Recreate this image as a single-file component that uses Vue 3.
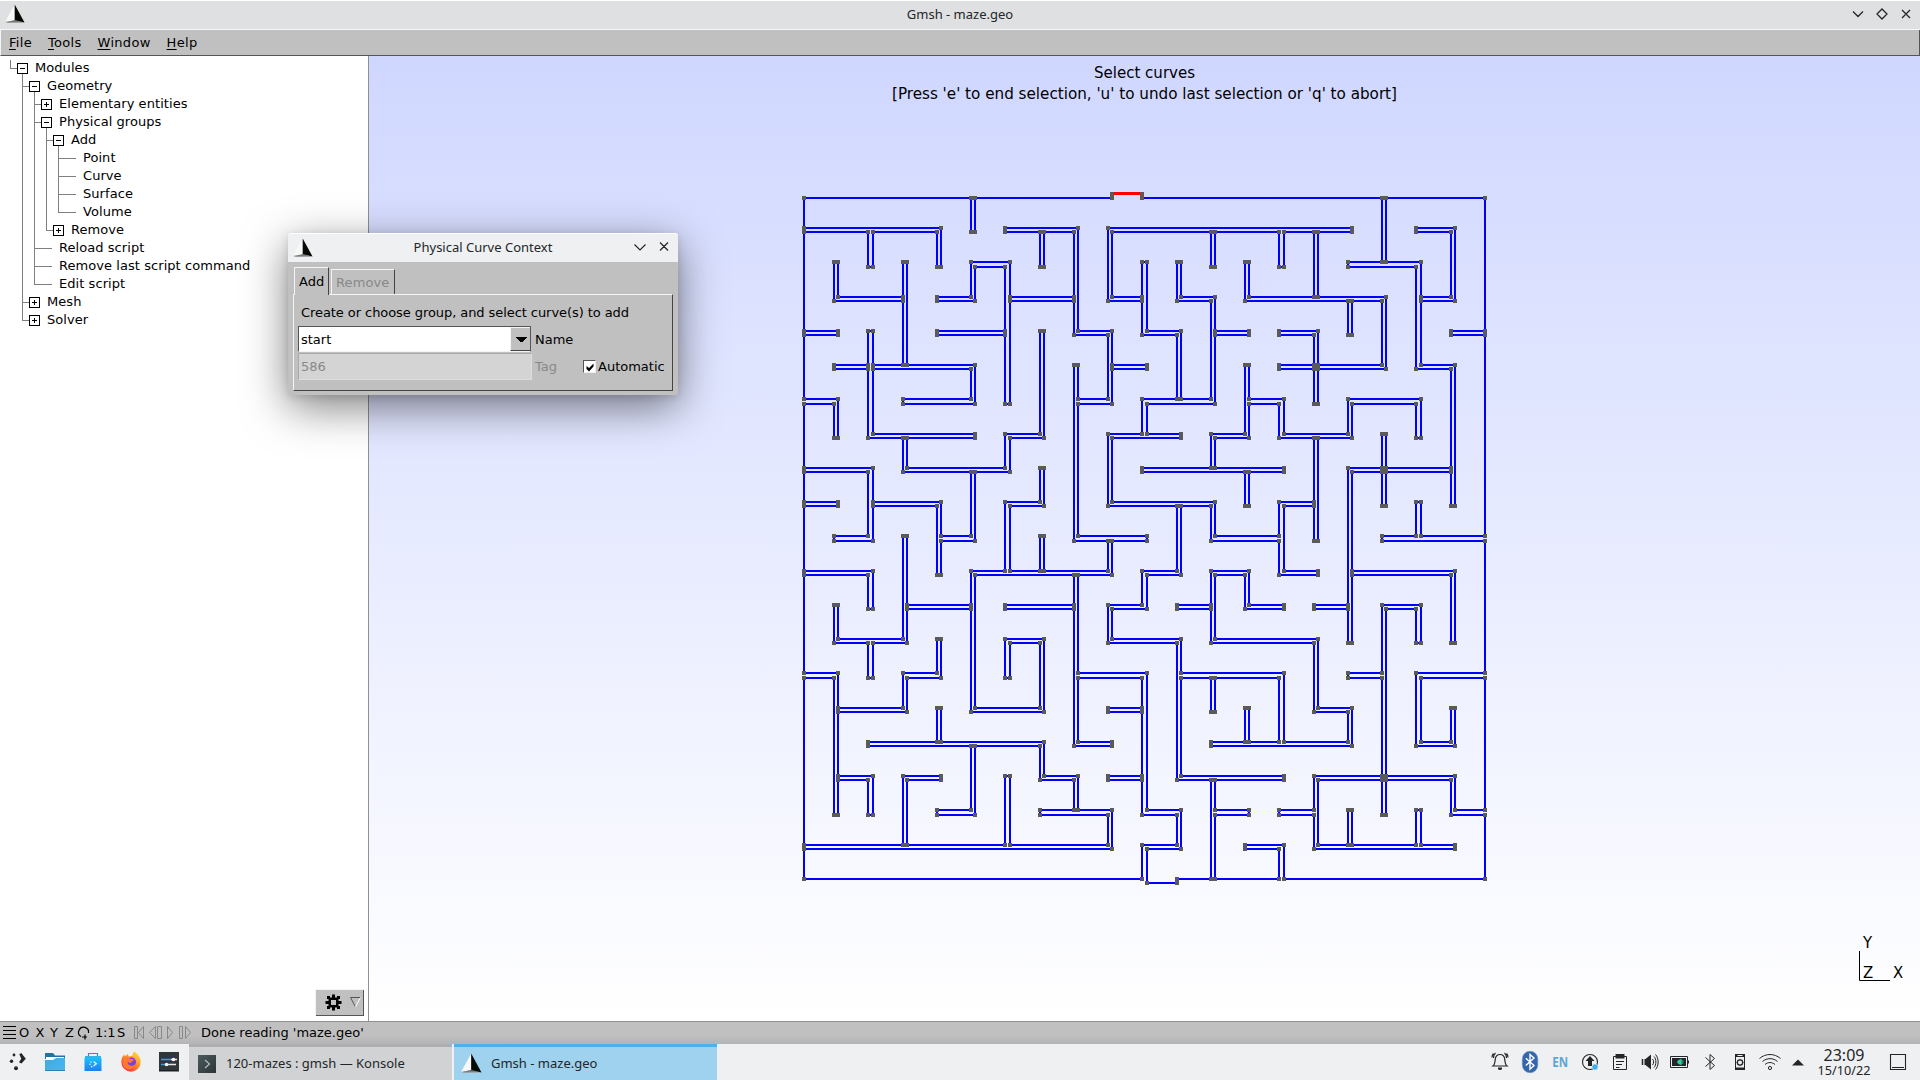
<script setup>
const menus = ['File', 'Tools', 'Window', 'Help']

// rails: depths whose vertical guide continues past the row
const tree = [
  { label: 'Modules', depth: 0, kind: 'open', rails: [] },
  { label: 'Geometry', depth: 1, kind: 'open', rails: [1] },
  { label: 'Elementary entities', depth: 2, kind: 'closed', rails: [1, 2] },
  { label: 'Physical groups', depth: 2, kind: 'open', rails: [1, 2] },
  { label: 'Add', depth: 3, kind: 'open', rails: [1, 2, 3] },
  { label: 'Point', depth: 4, kind: 'leaf', rails: [1, 2, 3, 4] },
  { label: 'Curve', depth: 4, kind: 'leaf', rails: [1, 2, 3, 4] },
  { label: 'Surface', depth: 4, kind: 'leaf', rails: [1, 2, 3, 4] },
  { label: 'Volume', depth: 4, kind: 'leaf', rails: [1, 2, 3] },
  { label: 'Remove', depth: 3, kind: 'closed', rails: [1, 2] },
  { label: 'Reload script', depth: 2, kind: 'leaf', rails: [1, 2] },
  { label: 'Remove last script command', depth: 2, kind: 'leaf', rails: [1, 2] },
  { label: 'Edit script', depth: 2, kind: 'leaf', rails: [1] },
  { label: 'Mesh', depth: 1, kind: 'closed', rails: [1] },
  { label: 'Solver', depth: 1, kind: 'closed', rails: [] },
]

function guides(row) {
  const x = 10.5 + 12 * row.depth
  let d = row.rails.map((r) => `M${10.5 + 12 * r} 0V18`).join('')
  if (!row.rails.includes(row.depth)) d += `M${x} 0V9`
  d += `M${x} 8.5H${row.kind === 'leaf' ? x + 17.5 : x + 7}`
  if (row.kind === 'open') d += `M${x + 12} 14V18`
  return d
}

// Maze: the two faces of every wall, by grid index
const xs = [[null, 804], [834, 838], [868, 873], [903, 907], [937, 941], [971, 975], [1005, 1010], [1040, 1044], [1074, 1078], [1108, 1112], [1142, 1147], [1177, 1181], [1211, 1215], [1245, 1249], [1279, 1284], [1314, 1318], [1348, 1352], [1382, 1386], [1416, 1421], [1451, 1455], [1485, null]]
const ys = [[194, 198], [228, 232], [262, 267], [297, 301], [331, 335], [365, 369], [399, 404], [434, 438], [468, 472], [502, 506], [536, 541], [571, 575], [605, 609], [639, 643], [673, 678], [708, 712], [742, 746], [776, 780], [810, 815], [845, 849], [879, 883]]

const across = [
  '0-9 10-20',
  '0-4 6-8 9-16 18-19',
  '5-6 16-18',
  '1-3 4-5 6-8 9-10 11-12 13-17 18-19',
  '0-1 4-6 8-9 10-11 12-13 14-15 19-20',
  '1-5 9-10 14-17 18-19',
  '0-1 3-5 8-9 10-12 13-14 16-18',
  '2-5 6-7 9-11 12-13 14-16',
  '0-2 3-6 10-14 16-19',
  '0-1 2-4 6-7 9-12 14-15',
  '1-2 4-5 8-10 12-14 17-20',
  '0-2 5-9 10-11 12-13 14-15 16-19',
  '3-5 6-8 9-10 11-12 13-14 15-16 17-18',
  '1-3 6-7 9-11 12-15',
  '0-1 3-4 8-10 11-14 16-17 18-20',
  '1-3 5-7 9-10 15-16',
  '2-7 8-9 12-16 18-19',
  '1-2 3-4 7-8 9-10 11-14 15-19',
  '4-5 7-9 10-11 12-13 14-15 19-20',
  '0-9 10-11 13-14 15-19',
  '0-10 11-20',
]
const down = [
  '0-20',
  '2-3 6-7 12-13 14-18',
  '1-2 4-7 8-10 11-12 13-14 17-18',
  '2-5 7-8 10-13 14-15 17-19',
  '1-2 9-11 13-14 15-16',
  '0-1 2-3 5-6 8-10 11-15 16-18',
  '2-6 7-8 9-11 13-14 17-19',
  '1-2 4-7 8-9 10-11 13-15 16-17',
  '1-4 5-10 11-16 17-18',
  '1-3 4-6 7-9 10-11 12-13 18-19',
  '2-4 6-7 11-12 14-18 19-20',
  '2-3 4-6 9-11 13-17 18-19',
  '1-2 3-6 7-8 9-10 11-13 14-15 17-20',
  '2-3 5-7 8-9 11-12 15-16',
  '1-2 6-7 9-11 14-16 19-20',
  '1-3 4-6 7-10 13-15 17-19',
  '3-4 6-7 8-13 15-16 18-19',
  '0-2 3-5 7-9 12-18',
  '2-5 6-7 9-10 12-13 14-16 18-19',
  '1-3 5-9 11-13 15-16 17-18',
  '0-20',
]

const spans = (text) => text.split(' ').map((s) => s.split('-').map(Number))
const edges = new Set()
across.forEach((t, j) => spans(t).forEach(([a, b]) => { for (let i = a; i < b; i++) edges.add(`h${i},${j}`) }))
down.forEach((t, i) => spans(t).forEach(([a, b]) => { for (let j = a; j < b; j++) edges.add(`v${i},${j}`) }))

let curves = ''
const points = []
const line = (x1, y1, x2, y2) => {
  if (x1 !== null && x2 !== null) curves += `M${x1} ${y1}L${x2} ${y2}`
}
for (let i = 0; i <= 20; i++) {
  for (let j = 0; j <= 20; j++) {
    const [x0, x1] = xs[i]
    const [y0, y1] = ys[j]
    const n = edges.has(`v${i},${j - 1}`)
    const s = edges.has(`v${i},${j}`)
    const w = edges.has(`h${i - 1},${j}`)
    const e = edges.has(`h${i},${j}`)
    if (!(n || s || w || e)) continue
    if (!n && j > 0) line(x0, y0, x1, y0)
    if (!s && j < 20) line(x0, y1, x1, y1)
    if (!w) line(x0, y0, x0, y1)
    if (!e) line(x1, y0, x1, y1)
    if (e) {
      if (j > 0) line(x1, y0, xs[i + 1][0], y0)
      if (j < 20) line(x1, y1, xs[i + 1][0], y1)
    }
    if (s) {
      line(x0, y1, x0, ys[j + 1][0])
      line(x1, y1, x1, ys[j + 1][0])
    }
    if (n === w && x0 !== null) points.push([x0, y0])
    if (n === e && x1 !== null) points.push([x1, y0])
    if (s === w && x0 !== null) points.push([x0, y1])
    if (s === e && x1 !== null) points.push([x1, y1])
  }
}
curves += 'M1147 883H1177'
</script>

<template>
  <div class="desktop">
    <svg class="defs" width="0" height="0">
      <defs>
        <linearGradient id="foot" x1="0" y1="0" x2="0" y2="1"><stop offset="0" stop-color="#555" /><stop offset="1" stop-color="#aaa" /></linearGradient>
        <linearGradient id="folder" x1="0" y1="0" x2="1" y2="1"><stop offset="0" stop-color="#3fa9de" /><stop offset="1" stop-color="#4fb6ea" /></linearGradient>
        <linearGradient id="bag" x1="0" y1="0" x2="0" y2="1"><stop offset="0" stop-color="#19c0fb" /><stop offset="1" stop-color="#1d7ff5" /></linearGradient>
        <linearGradient id="fox" x1="1" y1="0" x2=".2" y2="1"><stop offset="0" stop-color="#fff14a" /><stop offset=".45" stop-color="#ff9a1f" /><stop offset="1" stop-color="#f5205a" /></linearGradient>
        <linearGradient id="term" x1="0" y1="0" x2="1" y2="1"><stop offset="0" stop-color="#4b5a5e" /><stop offset="1" stop-color="#2b3437" /></linearGradient>
        <symbol id="gmsh" viewBox="0 0 21 21">
          <path d="M10.2 .5L0 19l10.2-1.7z" fill="#f8f8f8" />
          <path d="M0 19l10.2-1.9L20.5 19.6 3 20z" fill="url(#foot)" />
          <path d="M10.2 .5V17L20.5 19.4z" fill="#050a05" />
        </symbol>
      </defs>
    </svg>

    <header class="titlebar">
      <svg class="logo" width="20" height="20"><use href="#gmsh" /></svg>
      <span class="title">Gmsh - maze.geo</span>
      <svg class="controls" width="72" height="28" fill="none" stroke="#232629" stroke-width="1.3">
        <path d="M5 10.500L10 15.500L15 10.500M29 13l5-5 5 5-5 5zM54 9l8 8M62 9l-8 8" />
      </svg>
    </header>

    <nav class="menubar">
      <span v-for="m in menus" :key="m" class="menu"><u>{{ m[0] }}</u>{{ m.slice(1) }}</span>
    </nav>

    <main class="work">
      <aside class="sidebar">
        <div class="tree">
          <div v-for="row in tree" :key="row.label + row.depth" class="row">
            <svg :width="35 + 12 * row.depth" height="18" fill="none">
              <path :d="guides(row)" stroke="#808080" />
              <g v-if="row.kind !== 'leaf'" stroke="#000">
                <rect :x="17.5 + 12 * row.depth" y="3.500" width="10" height="10" fill="#fff" />
                <path :d="`M${20 + 12 * row.depth} 8.500h5`" />
                <path v-if="row.kind === 'closed'" :d="`M${22.5 + 12 * row.depth} 6v5`" />
              </g>
            </svg>
            <span>{{ row.label }}</span>
          </div>
        </div>
        <div class="gear">
          <svg width="49" height="27">
            <g transform="translate(18.500 13.500)" fill="#000">
              <path d="M-1.500-8h3v16h-3zM-8-1.500h16v3h-16z" />
              <path d="M-6.500-6.500h3v3h-3zM3.500-6.500h3v3h-3zM-6.500 3.500h3v3h-3zM3.500 3.500h3v3h-3z" />
              <rect x="-5" y="-5" width="10" height="10" />
              <rect x="-2.500" y="-2.500" width="5" height="5" fill="#c0c0c0" />
            </g>
            <path d="M45.500 8.500H35.500L40.500 18" fill="none" stroke="#555" />
            <path d="M45.500 8.500L40.500 18" stroke="#fff" />
          </svg>
        </div>
      </aside>

      <section class="canvas">
        <svg width="1551" height="965" viewBox="369 56 1551 965">
          <g class="gl">
            <text x="1094" y="77.500" textLength="101" lengthAdjust="spacingAndGlyphs">Select curves</text>
            <text x="892" y="99" textLength="505" lengthAdjust="spacingAndGlyphs">[Press 'e' to end selection, 'u' to undo last selection or 'q' to abort]</text>
            <text x="1863" y="948">Y</text>
            <text x="1863" y="978">Z</text>
            <text x="1893" y="978">X</text>
          </g>
          <path d="M1859.500 951V980.500H1890" fill="none" stroke="#000" />
          <path :d="curves" fill="none" stroke="#0000ff" stroke-width="2" />
          <path d="M1112 193.500H1142" stroke="#ff0000" stroke-width="3" />
          <rect v-for="(p, k) in points" :key="k" :x="p[0] - 2" :y="p[1] - 2" width="4" height="4" fill="#5a5a5a" />
        </svg>
      </section>
    </main>

    <footer class="status">
      <svg width="200" height="22" fill="none">
        <path d="M3 4.500H16M3 8.500H16M3 12.500H16M3 16.500H16" stroke="#000" />
        <g class="keys">
          <text x="19" y="15">O</text><text x="35.500" y="15">X</text><text x="50" y="15">Y</text><text x="65" y="15">Z</text>
          <text x="95" y="15" textLength="20.500">1:1</text><text x="117" y="15">S</text>
        </g>
        <path d="M81 14.500A5 5 0 1 1 88.500 11M82 15h5M85 12.500v5" stroke="#000" stroke-width="1.200" />
        <g stroke="#888">
          <path d="M134.500 4.500h3v12h-3zM143.500 4.500L138.500 10.500l5 6z" />
          <path d="M155.500 4.500L149.500 10.500l6 6zM157.500 4.500h4v12h-4z" />
          <path d="M167.500 4.500l5 6-5 6z" />
          <path d="M179.500 4.500h3v12h-3zM185.500 4.500l5 6-5 6z" />
        </g>
      </svg>
      <span class="message">Done reading 'maze.geo'</span>
    </footer>

    <div class="taskbar">
      <svg class="launchers" width="189" height="36">
        <g fill="#232629">
          <circle cx="14" cy="11" r="1.400" /><circle cx="11.500" cy="17.300" r="1.700" /><circle cx="16" cy="24.200" r="2" />
          <path d="M19.300 10.200l2-1.200L25.800 14.800l-4.300 4.700-2.500-1.200 2.300-3.500z" />
        </g>
        <path d="M45 9h8l2 2.500h10V15H45z" fill="#24719c" />
        <path d="M46 13h18v5H46z" fill="#fff" />
        <path d="M45 27V16h8l3-2h9v13z" fill="url(#folder)" />
        <path d="M45 26h20v1H45z" fill="#2980b9" />
        <path d="M88.500 13v-3.500h9V13" fill="none" stroke="#2f93bd" stroke-width="1.200" />
        <path d="M85 12h16v3H85z" fill="#30b5e8" />
        <path d="M84.500 14h17v13h-17z" fill="url(#bag)" />
        <path d="M93.500 17.500l2.800 2.200-2.800 2.300" fill="none" stroke="#d5f1ff" stroke-width="1.400" />
        <circle cx="91" cy="18" r=".7" fill="#fff" /><circle cx="90" cy="20.300" r=".7" fill="#fff" /><circle cx="91.700" cy="22.800" r=".8" fill="#fff" />
        <path d="M134.500 7.500c3 2 6.500 6 6.200 10.500a9.700 9.700 0 0 1-19.400 0c0-3 1-5.500 3-7.500l.5 2 3-2.500 1 2.500 4-1c-.5-1.500.5-3 1.700-4z" fill="url(#fox)" />
        <circle cx="131.500" cy="18" r="4.500" fill="#7b3fe0" />
        <path d="M123.500 13.500c3-1 5 0 7 1.500 2 0 3.500.3 4 1-2 .5-3 2-4 3l-3-1c0 4 5 5 8 2-1 4-5 6-8.500 5-4-1.200-5.500-6-3.500-11.500z" fill="#ff7a2c" />
        <path d="M159 8h20v19h-20z" fill="#30373b" />
        <path d="M159 26h20v1.500h-20z" fill="#1c2124" />
        <path d="M161 15.500h11" stroke="#2aa7e2" stroke-width="1.500" />
        <path d="M171 15.500h6M167 20.500h9" stroke="#e4e6e7" stroke-width="1.500" />
        <path d="M161 20.500h5" stroke="#2aa7e2" stroke-width="1.500" />
        <circle cx="173.500" cy="15.500" r="1.700" fill="#fff" /><circle cx="166.500" cy="20.500" r="1.700" fill="#fff" />
      </svg>

      <div class="task">
        <svg width="18" height="18"><rect width="18" height="18" fill="url(#term)" /><path d="M7 5l4.500 4L7 13" fill="none" stroke="#b9c3c6" stroke-width="1.100" /></svg>
        <span>120-mazes : gmsh — Konsole</span>
      </div>
      <div class="task active">
        <svg width="21" height="21"><use href="#gmsh" /></svg>
        <span>Gmsh - maze.geo</span>
      </div>

      <div class="tray">
        <svg viewBox="0 0 30 36" fill="none" stroke="#232629" stroke-width="1.200">
          <path d="M8 22c2-1.500 2-4 2.300-7 .4-2.800 2-4.500 4.700-4.500s4.300 1.700 4.700 4.500c.3 3 .3 5.500 2.300 7zM10.500 9c-1 .8-2 2.200-2 5M8.500 9.500c-1.200 1.200-1.500 2.300-1.500 4M19.500 9c1 .8 2 2.200 2 5M21.500 9.500c1.200 1.200 1.500 2.300 1.500 4" />
          <path d="M13 23.500h4v1a2 1.500 0 0 1-4 0z" fill="#232629" stroke="none" />
        </svg>
        <svg viewBox="0 0 30 36" fill="none">
          <rect x="7.300" y="7.200" width="15.500" height="21.500" rx="7.700" fill="#3466ab" stroke="#6d93c6" stroke-width=".6" />
          <path d="M10.800 14.200l8.200 7.300-4 3.700V10.500l4 3.500-8.200 7.600" stroke="#fff" stroke-width="1.400" />
        </svg>
        <svg viewBox="0 0 30 36"><text class="lang" x="7.200" y="22.500" textLength="15.800" lengthAdjust="spacingAndGlyphs">EN</text></svg>
        <svg viewBox="0 0 30 36" fill="none">
          <circle cx="15" cy="18" r="7.500" stroke="#232629" stroke-width="1.100" />
          <path d="M15 12l4.500 5h-2.500v5h-4v-5h-2.500z" fill="#232629" />
          <circle cx="20" cy="23" r="3" fill="#3daee9" stroke="#eff0f1" stroke-width=".5" />
        </svg>
        <svg viewBox="0 0 30 36" fill="none">
          <path d="M8.500 12.500h13v13h-13z" stroke="#232629" />
          <path d="M10.500 10h9v4.500h-9z" fill="#232629" />
          <path d="M11 17.500h8M11 20.500h6M11 23.500h3.500" stroke="#232629" />
        </svg>
        <svg viewBox="0 0 30 36" fill="none" stroke="#232629">
          <path d="M7.500 15v6" stroke-width="1.500" />
          <path d="M9.500 15h1L16 10.500v15L10.500 21h-1z" fill="#232629" stroke="none" />
          <path d="M17.500 15c1.500 1.500 1.500 4.500 0 6M19 12.500c2.500 2.500 2.500 8.500 0 11M20.500 10.500c3.500 3.500 3.500 11.500 0 15" />
        </svg>
        <svg viewBox="0 0 30 36" fill="none">
          <path d="M5.500 12.500h17v11h-17zM23.500 16.500v3" stroke="#232629" />
          <path d="M7 14h14v8H7z" fill="#232629" />
          <path d="M12 18c1-2 2-2.500 3.500-2.500V14.800h1V16.500h2v1h-2v1h2v1h-2v1.700h-1V20.500c-1.500 0-2.500-.5-3.500-2.500z" fill="#2bd0a0" />
        </svg>
        <svg viewBox="0 0 30 36" fill="none" stroke="#232629"><path d="M10.500 13.500l9 8-4.500 4V10.500l4.500 4-9 8" /></svg>
        <svg viewBox="0 0 30 36" fill="none">
          <path d="M10.500 10.500h9v15h-9z" stroke="#232629" />
          <path d="M10 10h10v3H10zM10 23.500h10V26H10z" fill="#232629" />
          <path d="M12.500 11.500h5" stroke="#eff0f1" />
          <circle cx="15" cy="18.500" r="2.700" stroke="#232629" stroke-width="1.200" />
          <path d="M15 14.800v7.400M11.300 18.500h7.400M12.400 15.900l5.200 5.200M17.600 15.900l-5.200 5.200" stroke="#232629" stroke-width=".6" />
          <circle cx="15" cy="18.500" r="1.800" fill="#eff0f1" />
        </svg>
        <svg viewBox="0 0 30 36" fill="none" stroke="#232629">
          <path d="M4.500 14.500c6-5.300 15-5.300 21 0M7.500 17.500c4.300-3.800 10.700-3.800 15 0M10 20.500c3-2.600 7-2.600 10 0" />
          <circle cx="15" cy="24" r="1.600" />
        </svg>
        <svg class="up" viewBox="0 0 26 36"><path d="M7 21.500L13 15.500 19 21.500z" fill="#232629" /></svg>
        <div class="clock"><span class="time">23:09</span><span class="date">15/10/22</span></div>
        <svg class="show" viewBox="0 0 18 36" fill="none"><path d="M1.500 10.500h15v15h-15zM3 23.500h12" stroke="#232629" stroke-width="1.100" /></svg>
      </div>
    </div>

    <div class="dialog">
      <div class="dialog-title">
        <svg class="logo" width="20" height="20"><use href="#gmsh" /></svg>
        <span class="title">Physical Curve Context</span>
        <svg class="controls" width="50" height="29" fill="none" stroke="#232629" stroke-width="1.200">
          <path d="M6.500 11.500L12 17l5.500-5.500M32 9.500l8 8M40 9.500l-8 8" />
        </svg>
      </div>
      <div class="tabs">
        <span class="tab on">Add</span>
        <span class="tab">Remove</span>
      </div>
      <div class="panel">
        <p>Create or choose group, and select curve(s) to add</p>
        <div class="field">
          <div class="combo">
            <span>start</span>
            <i><svg width="18" height="23"><path d="M5 9h11v1h-1v1h-1v1h-1v1h-1v1h-3v-1h-1v-1h-1v-1h-1v-1h-1z" /></svg></i>
          </div>
          <label>Name</label>
        </div>
        <div class="field off">
          <div class="tag">586</div>
          <label>Tag</label>
          <svg class="check" width="13" height="13"><path d="M2.500 5v3L5 10.500l4.500-5V2.500L5 7z" /></svg>
          <span class="auto">Automatic</span>
        </div>
      </div>
    </div>
  </div>
</template>

<style>
body { margin: 0; overflow: hidden; }
</style>

<style scoped>
.desktop { position: relative; width: 1920px; height: 1080px; display: flex; flex-direction: column; overflow: hidden; background: #c0c0c0; color: #000; font: 13px/18px "DejaVu Sans", sans-serif; white-space: nowrap; }
.desktop * { box-sizing: border-box; }
svg { display: block; flex: none; }
.defs { position: absolute; }
.titlebar { display: flex; align-items: center; height: 30px; border-top: 1px solid #fff; border-bottom: 1px solid #f7f7f7; background: #dfe0e2; color: #232629; font: 13px/20px "Noto Sans", sans-serif; }
.logo { margin: 0 0 2px 5px; }
.title { flex: 1; padding-bottom: 2px; text-align: center; }
.titlebar .title { padding-left: 47px; }
.menubar { display: flex; gap: 16px; height: 26px; padding: 4px 0 0 8px; border-left: 1px solid #f4f4f4; border-right: 1px solid #555; border-bottom: 1px solid #555; letter-spacing: .3px; }
.menu u { text-underline-offset: 2px; text-decoration-thickness: 1px; }
.work { display: flex; height: 966px; border-bottom: 1px solid #909090; }
.sidebar { display: flex; flex-direction: column; justify-content: space-between; width: 369px; padding: 4px 0 5px; border-right: 1px solid #909090; background: #fff; }
.row { display: flex; height: 18px; line-height: 16px; letter-spacing: .06px; }
.gear { align-self: flex-end; margin-right: 4px; width: 49px; height: 27px; background: #c0c0c0; box-shadow: inset 1px 1px #f4f4f4, inset -1px -1px #555; }
.canvas { flex: 1; background: linear-gradient(#d0d7ff, #fff); }
.gl { font: 16.5px "DejaVu Sans Condensed", "DejaVu Sans", sans-serif; font-stretch: condensed; fill: #000; }
.status { display: flex; height: 22px; background: linear-gradient(#c0c0c0 60%, #b4b4b4); }
.keys { font: 13px "DejaVu Sans", sans-serif; fill: #000; }
.message { padding-left: 1px; line-height: 21px; }
.taskbar { display: flex; height: 36px; background: #eff0f1; color: #232629; font: 13px/20px "Noto Sans", sans-serif; }
.task { display: flex; align-items: center; width: 263px; margin-right: 2px; padding: 0 9px; border-top: 3px solid #aeaeb0; background: #d1d2d3; gap: 10px; }
.task span { padding-bottom: 2px; }
.task.active { border-color: #4eb2ea; background: #9fd2ee; padding-left: 7px; gap: 9px; }
.tray { display: flex; margin-left: auto; }
.tray > svg { width: 30px; height: 36px; }
.lang { font: bold 14px "Noto Sans", sans-serif; fill: #5ba7d8; }
.tray > .up { width: 26px; }
.clock { width: 66px; display: flex; flex-direction: column; align-items: center; padding-top: 2px; }
.time { font-size: 16px; line-height: 18px; }
.date { font-size: 12.7px; line-height: 13px; }
.tray > .show { width: 18px; margin: 0 13px 0 12px; }
.dialog { position: absolute; left: 288px; top: 233px; width: 390px; height: 162px; border-radius: 3px; background: #c0c0c0; box-shadow: 0 12px 44px rgba(0, 0, 0, .5), 0 2px 8px rgba(0, 0, 0, .12); }
.dialog-title { position: relative; display: flex; align-items: center; height: 29px; border-radius: 3px 3px 0 0; background: #eff0f1; box-shadow: inset 0 1px #fff; color: #232629; font: 13px/20px "Noto Sans", sans-serif; }
.dialog-title .title { padding-left: 25px; }
.dialog .logo { margin-bottom: 0; }
.tabs { display: flex; align-items: flex-end; gap: 2px; height: 32px; padding-left: 6px; }
.tab { height: 25px; width: 64px; padding: 4px 0 0 4px; border: 1px solid #f4f4f4; border-right-color: #444; border-bottom: 0; color: #888; letter-spacing: .1px; }
.tab.on { position: relative; width: 35px; height: 28px; margin-bottom: -1px; padding: 5px 0 0 4px; background: #c0c0c0; color: #000; }
.panel { margin-left: 5px; width: 380px; height: 97px; border: 1px solid #f4f4f4; border-right-color: #444; border-bottom-color: #444; padding: 9px 0 0 4px; }
.panel p { margin: 0 0 4px 3px; height: 18px; letter-spacing: -.07px; }
.field { display: flex; height: 27px; align-items: center; }
.combo { display: flex; width: 233px; height: 26px; border: 1px solid #555; border-bottom-color: #f4f4f4; background: #fff; line-height: 25px; padding-left: 2px; margin-bottom: 1px; }
.combo span { flex: 1; }
.combo i { width: 20px; border: 1px solid #f4f4f4; border-right: 0; border-bottom-color: #444; background: #c0c0c0; }
.field label { margin-left: 4px; }
.off { color: #888; }
.tag { width: 234px; height: 27px; padding-left: 2px; line-height: 25px; background: #d4d4d4; border: 1px solid #aaa; border-right-color: #ddd; border-bottom-color: #ddd; }
.off label { width: 48px; margin-left: 3px; }
.check { background: #fff; border: 1px solid #555; border-right-color: #eee; border-bottom-color: #eee; }
.auto { color: #000; margin-left: 2px; }
</style>
